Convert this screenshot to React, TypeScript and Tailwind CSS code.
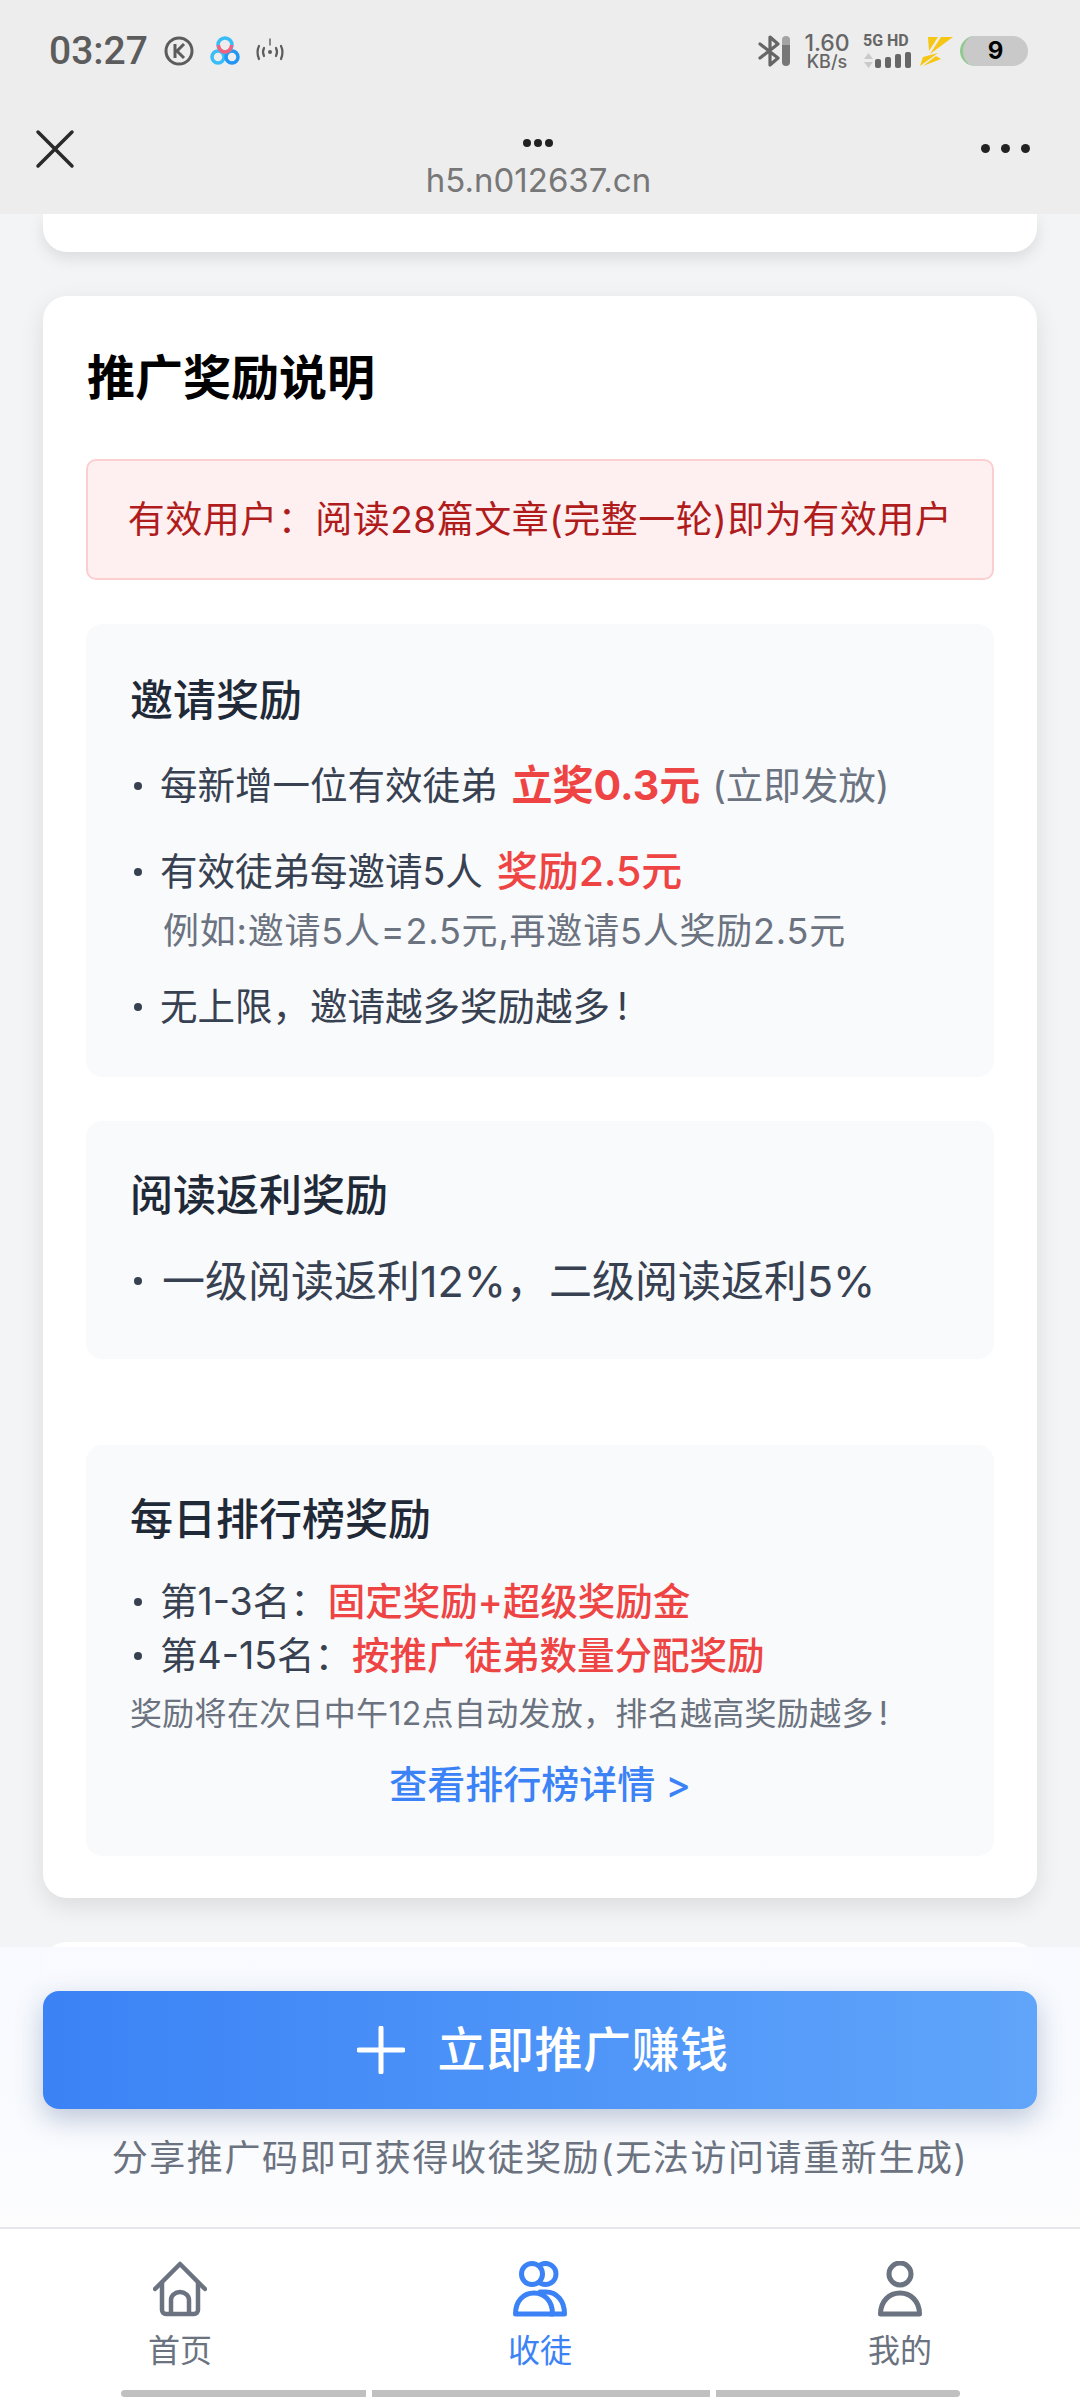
const marks = [
  { x: 60, y: 650, r: -18, t: 'MRMjMOODYxNw==' },
  { x: 300, y: 560, r: -16, t: '==MNXMjMOODY' },
  { x: 400, y: 820, r: 82, t: 'MRMjMOODYxNw==' },
  { x: 830, y: 700, r: 20, t: '==MNXMjMOOD' },
  { x: 0, y: 500, r: 50, t: 'MRMjMOODYxNw==' },
  { x: 560, y: 430, r: 8, t: 'MRMjMOODYxNw==' },
  { x: 20, y: 1210, r: -55, t: 'MRMjMOODYxNw==' },
  { x: 380, y: 1310, r: -35, t: '==MNXMjMOODYxNw==' },
  { x: 800, y: 1235, r: 8, t: 'MRMjMOODYxNw==' },
  { x: 820, y: 1340, r: -50, t: '==MNXMjMOODYxNw==' },
  { x: 730, y: 1560, r: -50, t: '==MNXMjMOODYxNw==' },
  { x: 300, y: 1800, r: 50, t: 'MRMjMOODYxNw==' },
  { x: 640, y: 1820, r: 75, t: 'MRMjMOODYxNw==' },
  { x: 690, y: 1960, r: -42, t: '==MNXMjMOODYxNw==' },
  { x: 760, y: 2080, r: -25, t: '==MNXMjMOODYxNw==' },
  { x: 320, y: 2200, r: 88, t: 'MRMjMOODYxNw==' },
  { x: 720, y: 2240, r: 60, t: 'MRMjMOODYxNw==' },
];

function StatusBar() {
  return (
    <div className="flex h-[102px] items-center justify-between pl-[49px] pr-[52px]">
      <div className="flex items-center text-[#5c5c5c]">
        <span className="w-[115px] font-['Roboto',sans-serif] text-[39px] font-medium leading-none">03:27</span>
        <svg width="30" height="30" viewBox="0 0 30 30" fill="none" stroke="currentColor">
          <circle cx="15" cy="15" r="13" strokeWidth="3" />
          <path d="M11 8v14M20 8l-7 7 7 7" strokeWidth="3" />
        </svg>
        <svg className="ml-[16px]" width="30" height="30" viewBox="0 0 30 30" fill="none" strokeWidth="3.5">
          <circle cx="8" cy="21" r="6" stroke="#38bdf8" />
          <circle cx="22" cy="21" r="6" stroke="#2196f3" />
          <circle cx="15" cy="9" r="7" stroke="#38bdf8" />
          <path d="M8.5 9a6.5 7 0 0 0 13 0" stroke="#f4607f" />
        </svg>
        <svg className="ml-[14px]" width="32" height="28" viewBox="0 0 32 28" fill="none" stroke="currentColor" strokeWidth="2.2" strokeLinecap="round">
          <path d="M5 9q-3 6 0 13M27 9q3 6 0 13M10 11q-2 4 0 8M22 11q2 4 0 8" />
          <circle cx="16" cy="15" r="2" fill="currentColor" stroke="none" />
          <path d="M16 2v6" strokeWidth="1.4" />
        </svg>
      </div>
      <div className="flex items-center text-[#666]">
        <svg width="22" height="32" viewBox="0 0 22 32" fill="none" stroke="currentColor" strokeWidth="3.2" strokeLinejoin="round" strokeLinecap="round">
          <path d="M2 9l18 14-8 7V2l8 7L2 23" />
        </svg>
        <div className="ml-[2px] h-[30px] w-[8px] rounded-full bg-gradient-to-b from-[#a3a3a3] from-30% to-[#777] to-30%" />
        <div className="ml-[14px] flex w-[46px] flex-col items-center">
          <span className="text-[23px] font-medium leading-[20px]">1.60</span>
          <span className="text-[18px] font-medium leading-[17px]">KB/s</span>
        </div>
        <div className="ml-[13px] flex w-[48px] flex-col">
          <span className="whitespace-nowrap font-['Roboto',sans-serif] text-[16px] font-bold leading-[14px]">5G HD</span>
          <div className="mt-[4px] flex h-[16px] items-end">
            <svg width="11" height="15" viewBox="0 0 11 15" fill="#c9c9c9">
              <path d="M5.5 0L10 6H1zM1 9h9l-4.500 6z" />
            </svg>
            <div className="ml-[1px] h-[9px] w-[6px] rounded-[2px] bg-[#666]" />
            <div className="ml-[4px] h-[11px] w-[6px] rounded-[2px] bg-[#666]" />
            <div className="ml-[4px] h-[14px] w-[6px] rounded-[2px] bg-[#666]" />
            <div className="ml-[4px] h-[16px] w-[6px] rounded-[2px] bg-[#666]" />
          </div>
        </div>
        <svg className="ml-[9px]" width="33" height="30" viewBox="0 0 33 30" fill="#f6c615">
          <path d="M8 1h10L9 15zM21 1h12L10 18zM18 17L0 30l3-9zM16 20L3 30l18-7z" />
        </svg>
        <div className="ml-[7px] flex h-[30px] w-[68px] items-center justify-center overflow-hidden rounded-full border-l-[3px] border-[#8fca8f] bg-[#c9c9c9]">
          <span className="text-[24px] font-bold leading-none text-black">9</span>
        </div>
      </div>
    </div>
  );
}

function TitleBar() {
  return (
    <div className="grid h-[112px] grid-cols-3 items-start pl-[35px] pr-[50px]">
      <svg className="mt-[27px]" width="40" height="40" viewBox="0 0 40 40" stroke="#2a2a2a" strokeWidth="3.5" strokeLinecap="round">
        <path d="M3 3l34 34M37 3L3 37" />
      </svg>
      <div className="ml-[12px] flex flex-col items-center">
        <div className="mt-[37px] flex gap-[3px]">
          <div className="h-[8px] w-[8px] rounded-full bg-[#222]" />
          <div className="h-[8px] w-[8px] rounded-full bg-[#222]" />
          <div className="h-[8px] w-[8px] rounded-full bg-[#222]" />
        </div>
        <span className="mt-[11px] whitespace-nowrap text-[33px] leading-[44px] text-[#777]">h5.n012637.cn</span>
      </div>
      <div className="mt-[42px] flex justify-end gap-[11px]">
        <div className="h-[9px] w-[9px] rounded-full bg-[#222]" />
        <div className="h-[9px] w-[9px] rounded-full bg-[#222]" />
        <div className="h-[9px] w-[9px] rounded-full bg-[#222]" />
      </div>
    </div>
  );
}

function Dot({ children, className }: { children: React.ReactNode; className?: string }) {
  return (
    <div className={`flex items-center whitespace-nowrap ${className || ''}`}>
      <span className="ml-[4px] mr-[18px] h-[8px] w-[8px] shrink-0 rounded-full bg-[#374151]" />
      {children}
    </div>
  );
}

function HomeIcon() {
  return (
    <svg width="54" height="56" viewBox="0 0 54 56" fill="none" stroke="currentColor" strokeWidth="4.5" strokeLinecap="round" strokeLinejoin="round">
      <path d="M2 28L27 3l25 25" />
      <path d="M9 22v27a4 4 0 0 0 4 4h28a4 4 0 0 0 4-4V22" />
      <path d="M18 52V39a9 8 0 0 1 18 0v13" />
    </svg>
  );
}

function PeopleIcon() {
  return (
    <svg width="54" height="56" viewBox="0 0 54 56" fill="none" stroke="currentColor" strokeWidth="5" strokeLinecap="round" strokeLinejoin="round">
      <circle cx="19" cy="13" r="10.5" />
      <path d="M28 3.5a10.5 10.5 0 1 1 0 19" />
      <path d="M2.500 53h37c0-13-8-21-18.500-21S2.500 40 2.500 53z" />
      <path d="M27 31h6c11 0 18.500 9 18.500 22H38" />
    </svg>
  );
}

function UserIcon() {
  return (
    <svg width="44" height="56" viewBox="0 0 44 56" fill="none" stroke="currentColor" strokeWidth="5" strokeLinecap="round" strokeLinejoin="round">
      <circle cx="22" cy="13" r="11" />
      <path d="M2.500 53h39c0-13-9-21-19.500-21S2.500 40 2.500 53z" />
    </svg>
  );
}

export default function App() {
  return (
    <div className="relative h-[2400px] w-[1080px] overflow-hidden bg-[#f3f4f6] font-['Inter','Noto_Sans_CJK_SC',sans-serif]">
      <div className="relative z-10 bg-[#ededed]">
        <StatusBar />
        <TitleBar />
      </div>

      <div className="flex flex-col px-[43px]">
        <div className="h-[38px] rounded-b-[24px] bg-white shadow-[0_6px_16px_rgba(0,0,0,0.1)]" />

        <div className="mt-[44px] rounded-[24px] bg-white px-[43px] pb-[42px] pt-[54px] shadow-[0_8px_24px_rgba(0,0,0,0.1)]">
          <h2 className="ml-[1px] text-[48px] font-bold leading-[56px] text-black">推广奖励说明</h2>

          <div className="mt-[53px] flex h-[121px] items-center justify-center whitespace-nowrap rounded-[10px] border-2 border-[#fbcfd0] bg-[#fef0f1] text-[37px] tracking-[0.5px] text-[#b01c1c]">
            有效用户：阅读28篇文章(完整一轮)即为有效用户
          </div>

          <div className="mt-[44px] h-[453px] rounded-[16px] bg-[#f9fafb] px-[44px] pt-[48px] text-[#374151]">
            <h3 className="text-[43px] font-medium leading-[56px] text-[#1f2937]">邀请奖励</h3>
            <Dot className="mt-[28px] h-[60px] text-[37.5px]">
              每新增一位有效徒弟
              <span className="ml-[14px] text-[41px] font-bold text-[#ef4444]">立奖0.3元</span>
              <span className="ml-[12px] text-[#6b7280]">(立即发放)</span>
            </Dot>
            <Dot className="mt-[26px] h-[60px] text-[37.5px]">
              有效徒弟每邀请5人
              <span className="ml-[14px] text-[41px] font-medium text-[#ef4444]">奖励2.5元</span>
            </Dot>
            <div className="ml-[33px] h-[58px] whitespace-nowrap text-[36px] leading-[58px] tracking-[0.8px] text-[#6b7280]">例如:邀请5人=2.5元,再邀请5人奖励2.5元</div>
            <Dot className="mt-[17px] h-[60px] text-[37.5px]">
              无上限，邀请越多奖励越多<span className="ml-[7px]">!</span>
            </Dot>
          </div>

          <div className="mt-[44px] h-[238px] rounded-[16px] bg-[#f9fafb] px-[44px] pt-[46px] text-[#374151]">
            <h3 className="text-[43px] font-medium leading-[56px] text-[#1f2937]">阅读返利奖励</h3>
            <Dot className="mt-[28px] h-[60px] text-[43px]">
              <span className="ml-[2px]">一级阅读返利12%，二级阅读返利5%</span>
            </Dot>
          </div>

          <div className="mt-[86px] h-[411px] rounded-[16px] bg-[#f9fafb] px-[44px] pt-[46px] text-[#374151]">
            <h3 className="text-[43px] font-medium leading-[56px] text-[#1f2937]">每日排行榜奖励</h3>
            <Dot className="mt-[28px] h-[54px] text-[37.5px]">
              第1-3名：<span className="font-medium text-[#ef4444]">固定奖励+超级奖励金</span>
            </Dot>
            <Dot className="h-[54px] text-[37.5px]">
              第4-15名：<span className="font-medium text-[#ef4444]">按推广徒弟数量分配奖励</span>
            </Dot>
            <div className="mt-[4px] h-[54px] whitespace-nowrap text-[32px] leading-[54px] tracking-[0.3px] text-[#6b7280]">
              奖励将在次日中午12点自动发放，排名越高奖励越多<span className="ml-[5px]">!</span>
            </div>
            <div className="mt-[16px] text-center text-[38px] font-medium leading-[54px] text-[#3b82f6]">查看排行榜详情 &gt;</div>
          </div>
        </div>

        <div className="mt-[44px] h-[80px] rounded-t-[24px] bg-white" />
      </div>

      {/* bottom bar sits over the scrolling content */}
      <div className="absolute bottom-0 left-0 right-0 z-10 flex h-[453px] flex-col">
        <div className="flex h-[280px] flex-col items-center bg-gradient-to-b from-[#f8faff]/95 via-[#f8fafe] to-[#fdfdfe] px-[43px] pt-[44px]">
          <div className="flex h-[118px] w-full items-center justify-center rounded-[16px] bg-gradient-to-r from-[#3b82f6] to-[#60a5fa] pl-[6px] text-[48px] font-medium tracking-[0.5px] text-white shadow-[0_10px_28px_rgba(50,80,130,0.3)]">
            <svg width="48" height="48" viewBox="0 0 48 48" stroke="white" strokeWidth="5" strokeLinecap="round">
              <path d="M24 2v44M2 24h44" />
            </svg>
            <span className="ml-[32px]">立即推广赚钱</span>
          </div>
          <div className="mt-[24px] whitespace-nowrap text-[36px] leading-[50px] tracking-[1.6px] text-[#6b7280]">分享推广码即可获得收徒奖励(无法访问请重新生成)</div>
        </div>
        <div className="flex flex-1 flex-col border-t-2 border-[#e5e7eb] bg-white">
          <div className="grid flex-1 grid-cols-3 pt-[32px] text-[#6b7280]">
            <div className="flex flex-col items-center">
              <HomeIcon />
              <span className="mt-[13px] text-[32px] leading-[42px]">首页</span>
            </div>
            <div className="flex flex-col items-center text-[#3b82f6]">
              <PeopleIcon />
              <span className="mt-[13px] text-[32px] leading-[42px]">收徒</span>
            </div>
            <div className="flex flex-col items-center">
              <UserIcon />
              <span className="mt-[13px] text-[32px] leading-[42px]">我的</span>
            </div>
          </div>
          <div className="mb-[3px] flex h-[7px] justify-center gap-[6px]">
            <div className="w-[245px] rounded-l-full bg-[#c0c0c0]" />
            <div className="w-[338px] bg-[#c0c0c0]" />
            <div className="w-[244px] rounded-r-full bg-[#c0c0c0]" />
          </div>
        </div>
      </div>

      {/* faint watermark over everything */}
      <div className="pointer-events-none absolute inset-0 z-20 overflow-hidden">
        {marks.map((m, i) => (
          <span
            key={i}
            className="absolute whitespace-nowrap font-['Liberation_Sans',sans-serif] text-[24px] tracking-[2px] text-black/[0.022]"
            style={{ left: m.x, top: m.y, transform: `rotate(${m.r}deg)` }}
          >
            {m.t}
          </span>
        ))}
      </div>
    </div>
  );
}
